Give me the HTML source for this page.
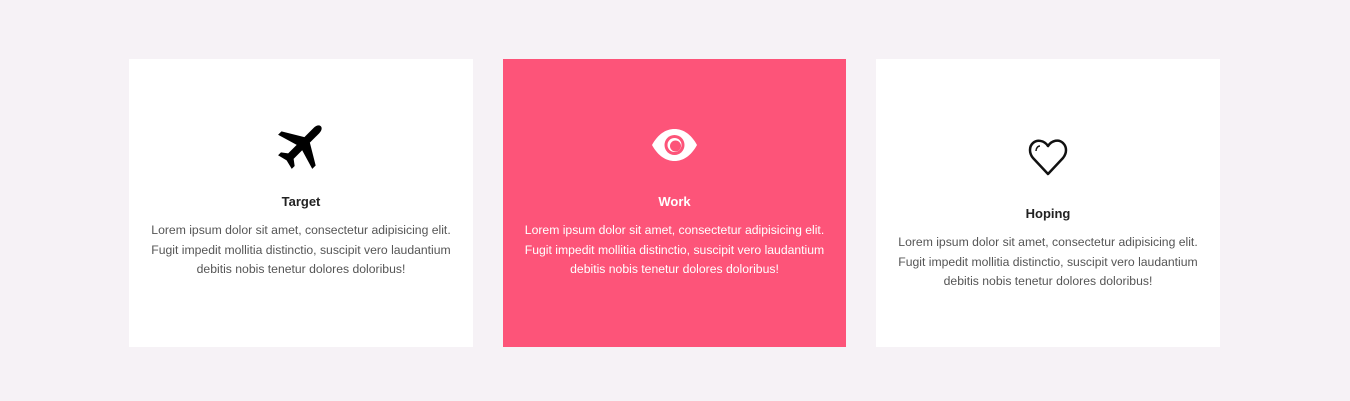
<!DOCTYPE html>
<html><head><style>
body{margin:0;width:1350px;height:401px;background:#f6f2f6;font-family:"Liberation Sans",sans-serif;position:relative;overflow:hidden}
.c{position:absolute;top:59px;height:288px;background:#fff;text-align:center;color:#555}
.c h3{position:absolute;left:0;right:0;margin:0;font-size:13px;font-weight:bold;color:#222}
.c p{position:absolute;left:0;right:0;margin:0;font-size:12.2px;line-height:19.5px}
.pink{background:#fd5479;color:#fff}
.pink h3{color:#fff}
svg{position:absolute}
</style></head><body>
<div class="c" style="left:129px;width:344px">
<svg style="left:144px;top:57px" width="58" height="58" viewBox="0 0 24 24"><g transform="rotate(45 12 12)"><path fill="#000" d="M12 1c1 0 1.6 1.2 1.6 2.5V9l8.4 5v2l-8.4-2.5v5l2.4 1.8V22L12 21l-4 1v-1.7l2.4-1.8v-5L2 16v-2l8.4-5V3.5C10.4 2.2 11 1 12 1z"/></g></svg>
<h3 style="top:135px">Target</h3>
<p style="top:162px">Lorem ipsum dolor sit amet, consectetur adipisicing elit.<br>Fugit impedit mollitia distinctio, suscipit vero laudantium<br>debitis nobis tenetur dolores doloribus!</p>
</div>
<div class="c pink" style="left:503px;width:343px">
<svg style="left:148px;top:69px" width="47" height="34" viewBox="0 0 47 34"><path fill="#fff" d="M1 17C7 6 15 1 23.5 1S40 6 46 17C40 28 32 33 23.5 33S7 28 1 17z"/><circle cx="23.5" cy="17" r="10" fill="#fd5479"/><circle cx="23.5" cy="17" r="7" fill="#fff"/><circle cx="24.5" cy="18" r="5.5" fill="#fd5479"/></svg>
<h3 style="top:135px">Work</h3>
<p style="top:162px">Lorem ipsum dolor sit amet, consectetur adipisicing elit.<br>Fugit impedit mollitia distinctio, suscipit vero laudantium<br>debitis nobis tenetur dolores doloribus!</p>
</div>
<div class="c" style="left:876px;width:344px">
<svg style="left:151px;top:79px" width="42" height="38" viewBox="0 0 42 38"><path fill="none" stroke="#111" stroke-width="2.5" stroke-linejoin="round" d="M21 8C17 2 10 1.5 6 5S2 15 6 20l15 16 15-16c4-5 4-11 0-15S25 2 21 8z"/><path fill="none" stroke="#111" stroke-width="1.5" d="M9 13c0-3 2-5 4-5"/></svg>
<h3 style="top:147px">Hoping</h3>
<p style="top:174px">Lorem ipsum dolor sit amet, consectetur adipisicing elit.<br>Fugit impedit mollitia distinctio, suscipit vero laudantium<br>debitis nobis tenetur dolores doloribus!</p>
</div>
</body></html>
